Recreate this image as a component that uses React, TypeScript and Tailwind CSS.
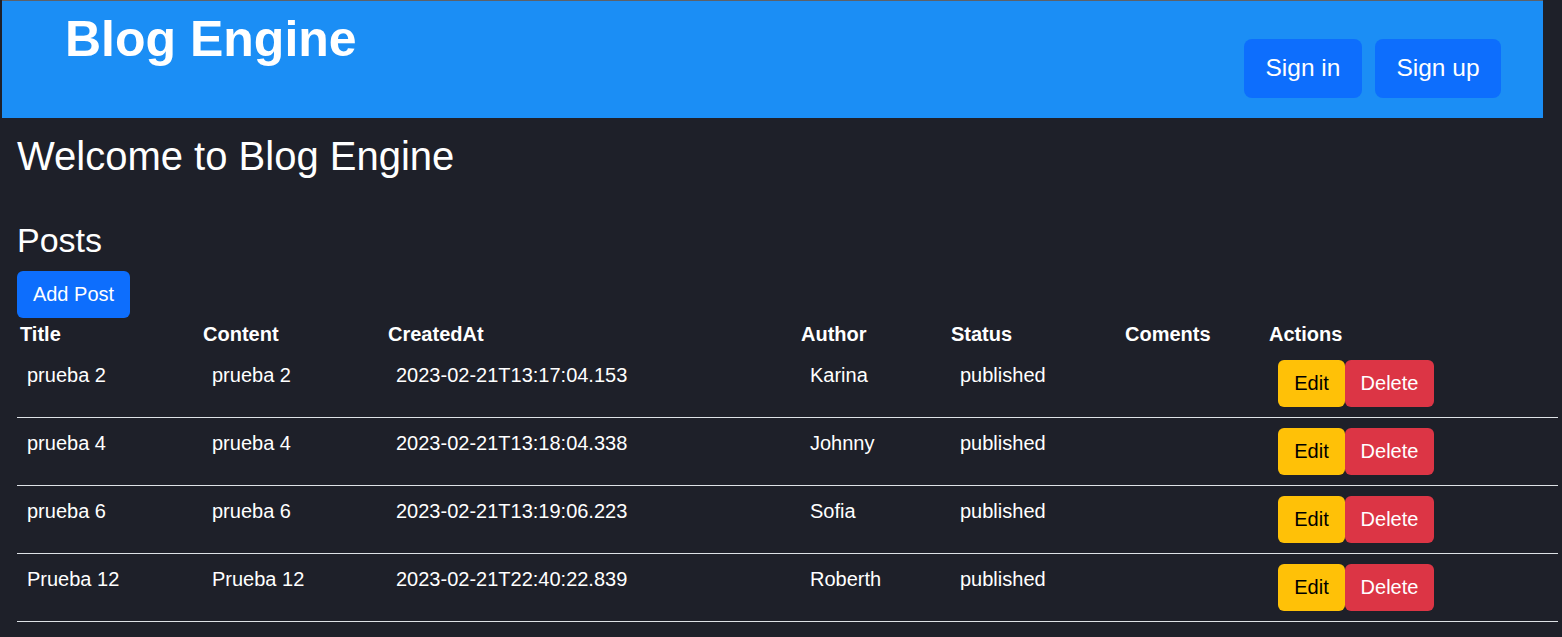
const posts = [
  { title: "prueba 2", content: "prueba 2", createdAt: "2023-02-21T13:17:04.153", author: "Karina", status: "published" },
  { title: "prueba 4", content: "prueba 4", createdAt: "2023-02-21T13:18:04.338", author: "Johnny", status: "published" },
  { title: "prueba 6", content: "prueba 6", createdAt: "2023-02-21T13:19:06.223", author: "Sofia", status: "published" },
  { title: "Prueba 12", content: "Prueba 12", createdAt: "2023-02-21T22:40:22.839", author: "Roberth", status: "published" },
]

const cols = "grid grid-cols-[185px_185px_413px_150px_174px_144px_1fr]"

function App() {
  return (
    <div className="min-h-screen bg-[#1e2029] text-white font-['Liberation_Sans',Arial,sans-serif]">
      <header className="ml-[2px] w-[1541px] h-[118px] bg-[#1b8ef5] border-t border-[#5d6168] flex justify-between items-start">
        <h1 className="ml-[63px] mt-[8px] text-[50px] leading-[1.2] font-bold">Blog Engine</h1>
        <div className="mt-[38px] mr-[42px] flex gap-[13px]">
          <button className="h-[59px] w-[118px] rounded-lg bg-[#0d6efd] text-[24.5px]">Sign in</button>
          <button className="h-[59px] w-[126px] rounded-lg bg-[#0d6efd] text-[24.5px]">Sign up</button>
        </div>
      </header>

      <main className="pl-[17px] pr-[4px]">
        <h2 className="mt-[14px] text-[40px] leading-[1.2]">Welcome to Blog Engine</h2>
        <h3 className="mt-[40px] text-[34px] leading-[1.2]">Posts</h3>
        <button className="mt-[10px] h-[47px] w-[113px] rounded-md bg-[#0d6efd] text-[20px]">Add Post</button>

        <div className="text-[20px] leading-[30px]">
          <div className={`${cols} ml-[1px] h-[32px] font-bold items-center`}>
            <div className="pl-[2px]">Title</div>
            <div>Content</div>
            <div>CreatedAt</div>
            <div>Author</div>
            <div>Status</div>
            <div>Coments</div>
            <div>Actions</div>
          </div>
          {posts.map((p) => (
            <div key={p.createdAt} className={`${cols} border-b border-[#dee2e6] pt-[10px] pb-[10px]`}>
              <div className="px-[10px]">{p.title}</div>
              <div className="px-[10px]">{p.content}</div>
              <div className="px-[9px]">{p.createdAt}</div>
              <div className="px-[10px]">{p.author}</div>
              <div className="px-[10px]">{p.status}</div>
              <div className="px-[10px]"></div>
              <div className="px-[10px] flex">
                <button className="h-[47px] w-[67px] rounded-md bg-[#ffc107] text-black">Edit</button>
                <button className="h-[47px] w-[89px] rounded-md bg-[#dc3545] text-white">Delete</button>
              </div>
            </div>
          ))}
        </div>
      </main>
    </div>
  )
}

export default App
